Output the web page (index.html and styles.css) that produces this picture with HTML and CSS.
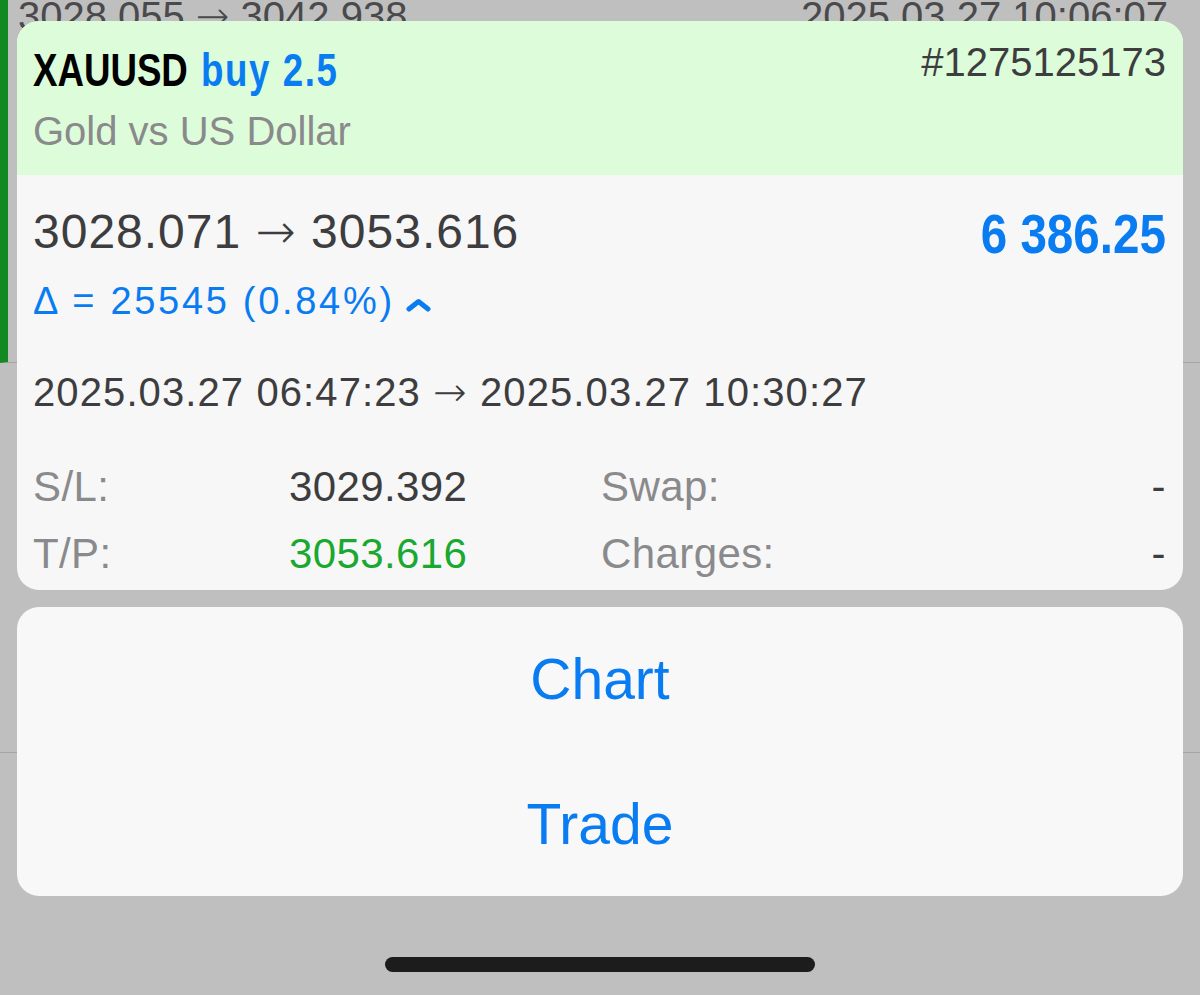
FILE: index.html
```html
<!DOCTYPE html>
<html lang="en">
<head>
<meta charset="utf-8">
<title>XAUUSD position</title>
<link rel="stylesheet" href="styles.css">
</head>
<body>
<div class="screen">
  <div class="backdrop">
    <div class="bg-row bg-row-profit">
      <div class="bg-line">
        <span>3028.055 <span class="arrow">→</span> 3042.938</span>
        <span>2025.03.27 10:06:07</span>
      </div>
    </div>
    <div class="bg-row bg-row-second"></div>
  </div>

  <div class="sheet">
    <div class="card info">
      <div class="info-head">
        <div class="head-left">
          <div class="title"><span class="narrow"><span class="sym">XAUUSD</span> <span class="side">buy 2.5</span></span></div>
          <div class="subtitle">Gold vs US Dollar</div>
        </div>
        <div class="ticket">#1275125173</div>
      </div>
      <div class="info-body">
        <div class="price-row">
          <div class="prices">3028.071 <span class="arrow">→</span> 3053.616</div>
          <div class="profit"><span class="narrow-r">6 386.25</span></div>
        </div>
        <div class="delta">Δ = 25545 (0.84%)<svg class="chev" width="27" height="14" viewBox="0 0 27 14"><path d="M4 11 L13.5 3.5 L23 11" fill="none" stroke="#0a7cf2" stroke-width="5" stroke-linecap="round" stroke-linejoin="round"/></svg></div>
        <div class="dates">2025.03.27 06:47:23 <span class="arrow">→</span> 2025.03.27 10:30:27</div>
        <div class="stats">
          <div class="lbl">S/L:</div>
          <div class="val">3029.392</div>
          <div class="lbl">Swap:</div>
          <div class="val right">-</div>
          <div class="lbl">T/P:</div>
          <div class="val green">3053.616</div>
          <div class="lbl">Charges:</div>
          <div class="val right">-</div>
        </div>
      </div>
    </div>

    <div class="card actions">
      <div class="action">Chart</div>
      <div class="action">Trade</div>
    </div>

    <div class="home-bar"></div>
  </div>
</div>
</body>
</html>
```

FILE: styles.css
```css
* { box-sizing: border-box; }
html, body { margin: 0; padding: 0; }
body {
  width: 1200px;
  height: 995px;
  overflow: hidden;
  background: #bfbfbf;
  font-family: "Liberation Sans", Arial, sans-serif;
}
.screen {
  position: relative;
  width: 1200px;
  height: 995px;
}
.arrow {
  font-family: "DejaVu Sans", sans-serif;
  font-weight: 200;
}

/* list behind the sheet */
.backdrop {
  position: absolute;
  inset: 0;
  display: flex;
  flex-direction: column;
}
.bg-row {
  border-bottom: 1px solid #a6a6a6;
}
.bg-row-profit {
  height: 363px;
  border-left: 8px solid #128a20;
}
.bg-row-second {
  height: 390px;
}
.bg-line {
  display: flex;
  justify-content: space-between;
  padding: 0 32px 0 10px;
  margin-top: -7px;
  font-size: 40px;
  line-height: 46px;
  color: #4a4a4c;
}

/* overlay sheet */
.sheet {
  position: absolute;
  inset: 0;
  padding: 21px 17px 0;
  display: flex;
  flex-direction: column;
}
.card {
  border-radius: 22px;
  overflow: hidden;
}
.info {
  height: 569px;
  background: #f7f7f7;
}
.info-head {
  height: 154px;
  background: #ddfcda;
  display: flex;
  justify-content: space-between;
  align-items: flex-start;
  padding: 16px 17px 0 16px;
}
.head-left {
  margin-top: 5px;
}
.title {
  font-weight: bold;
  font-size: 47px;
  line-height: 56px;
  color: #000;
  white-space: nowrap;
}
.narrow {
  display: inline-block;
  transform: scaleX(0.78);
  transform-origin: left center;
}
.narrow-r {
  display: inline-block;
  transform: scaleX(0.85);
  transform-origin: right center;
}
.title .side { color: #0a7cf2; letter-spacing: 2px; margin-left: 4px; }
.subtitle {
  margin-top: 8px;
  font-size: 40px;
  line-height: 50px;
  color: #8a8a8c;
}
.ticket {
  font-size: 40px;
  line-height: 50px;
  color: #3d3d40;
}

.info-body {
  padding: 28px 17px 0 16px;
  color: #3d3d40;
}
.price-row {
  display: flex;
  justify-content: space-between;
  align-items: flex-start;
}
.prices {
  font-size: 48px;
  line-height: 56px;
  letter-spacing: 1px;
}
.profit {
  margin-top: 3px;
  font-weight: bold;
  font-size: 56px;
  line-height: 56px;
  color: #0a7cf2;
  white-space: nowrap;
}
.delta {
  margin-top: 16px;
  font-size: 38px;
  line-height: 46px;
  letter-spacing: 2.7px;
  color: #0a7cf2;
}
.chev {
  margin-left: 10px;
  vertical-align: 2px;
}
.dates {
  margin-top: 43px;
  font-size: 40px;
  line-height: 50px;
  letter-spacing: 1.1px;
}
.stats {
  margin-top: 36px;
  display: grid;
  grid-template-columns: 256px 312px 1fr auto;
  font-size: 42px;
  line-height: 67px;
  letter-spacing: 0.4px;
}
.lbl { color: #8a8a8c; }
.val { color: #3d3d40; }
.val.green { color: #19a930; }
.val.right { text-align: right; }

.actions {
  margin-top: 17px;
  height: 289px;
  background: #f8f8f8;
  display: flex;
  flex-direction: column;
}
.action {
  flex: 1;
  display: flex;
  align-items: center;
  justify-content: center;
  font-size: 57px;
  color: #0a7cf2;
}

.home-bar {
  align-self: center;
  margin-top: 61px;
  width: 430px;
  height: 15px;
  border-radius: 8px;
  background: #1c1c1c;
}
```
